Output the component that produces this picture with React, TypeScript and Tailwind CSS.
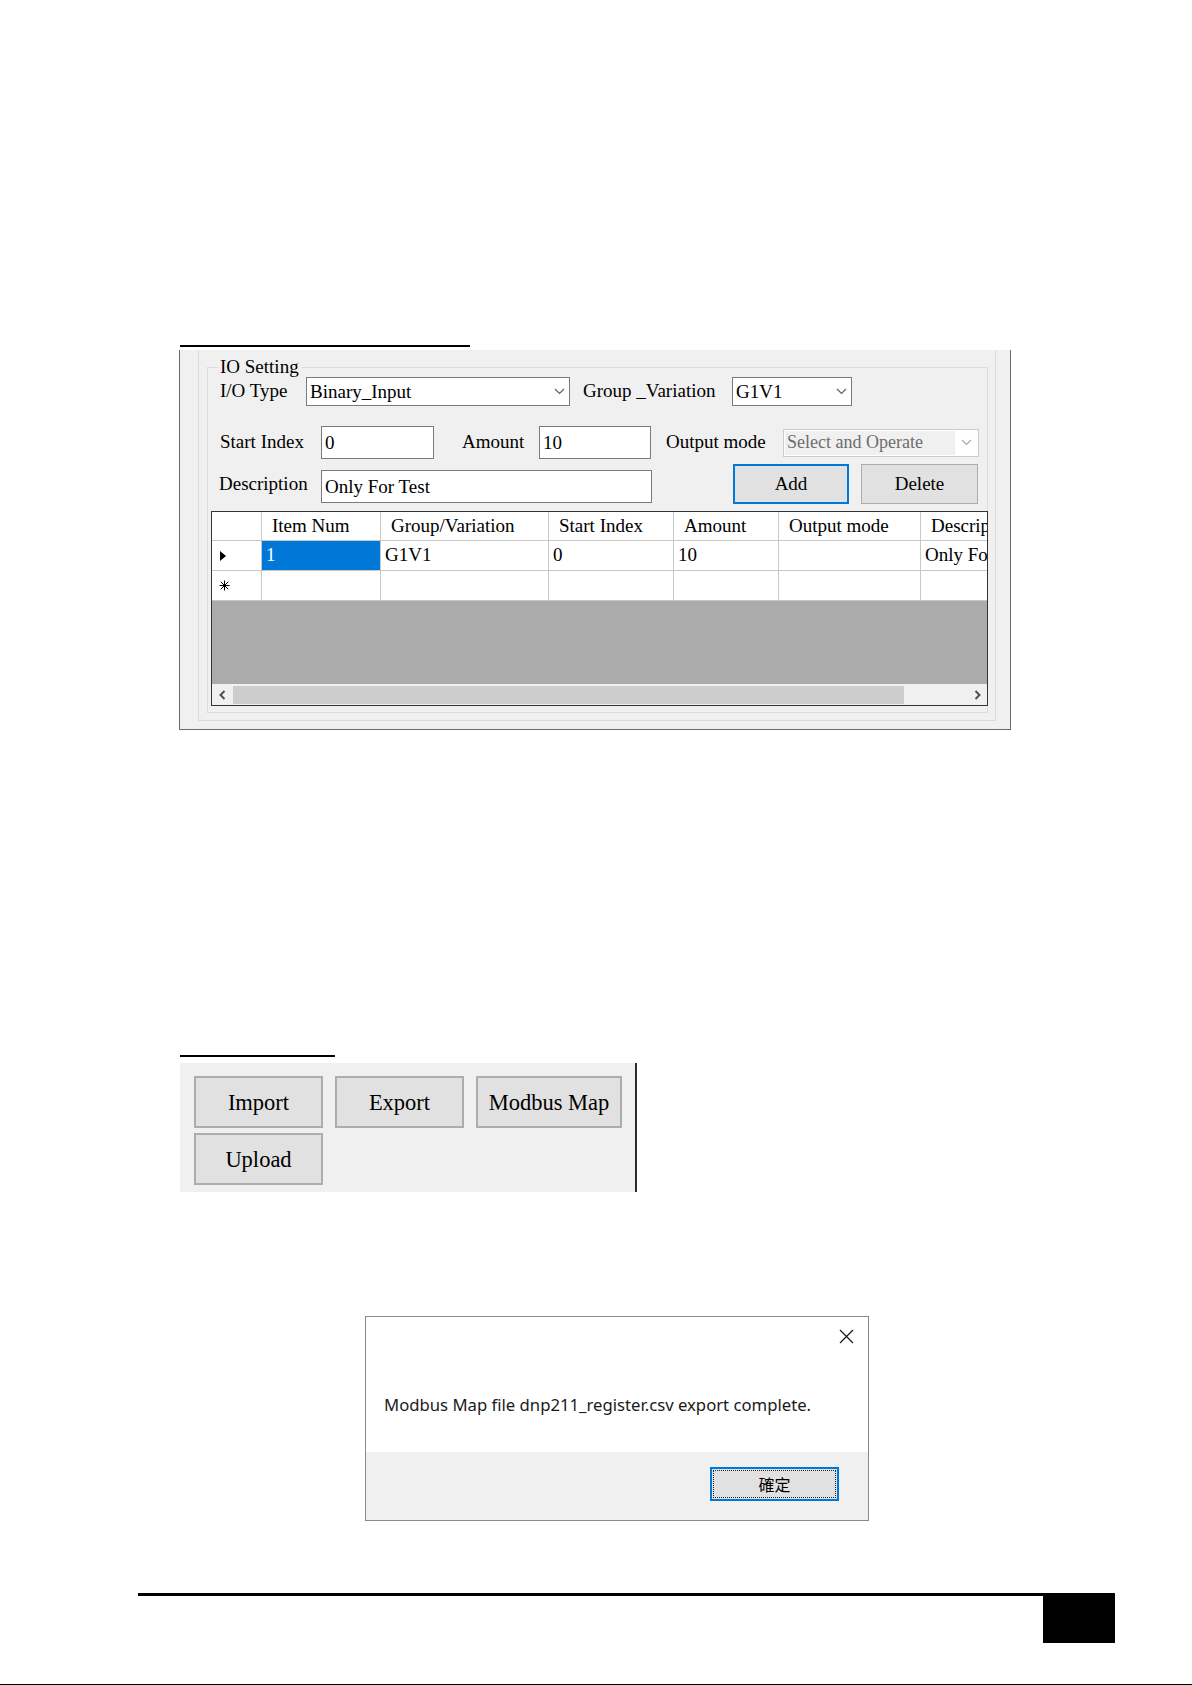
import React from 'react';

const serif = { fontFamily: '"Liberation Serif", "Times New Roman", serif' };

const Chevron = ({ color = '#606060' }: { color?: string }) => (
  <svg width="11" height="7" viewBox="0 0 11 7" className="shrink-0">
    <polyline points="1,1 5.5,5.5 10,1" fill="none" stroke={color} strokeWidth="1.2" />
  </svg>
);

const Combo = ({ value, w }: { value: string; w: string }) => (
  <div className={`${w} h-[29px] bg-white border border-[#7a7a7a] flex items-center justify-between pl-[3px] pr-[4px]`}>
    <span className="leading-none">{value}</span>
    <Chevron />
  </div>
);

const Field = ({ value, w }: { value: string; w: string }) => (
  <div className={`${w} h-[33px] bg-white border border-[#7a7a7a] flex items-center pl-[3px]`}>
    <span className="leading-none">{value}</span>
  </div>
);

const cols = ['', 'Item Num', 'Group/Variation', 'Start Index', 'Amount', 'Output mode', 'Description'];
const row1 = ['1', 'G1V1', '0', '10', '', 'Only For Test'];
const gridCols = 'grid grid-cols-[50px_119px_168px_125px_105px_142px_160px]';

function IoTable() {
  return (
    <div className="ml-[3px] mt-[7px] w-[777px] h-[195px] border border-[#333] bg-[#ababab] overflow-hidden flex flex-col">
      <div className={`${gridCols} h-[29px] bg-white shrink-0`}>
        {cols.map((c, i) => (
          <div key={i} className="border-r border-b border-[#c8c8c8] pl-[10px] flex items-center whitespace-nowrap overflow-hidden">
            {c}
          </div>
        ))}
      </div>
      <div className={`${gridCols} h-[30px] bg-white shrink-0`}>
        <div className="border-r border-b border-[#c8c8c8] flex items-center pl-[8px]">
          <svg width="6" height="10" viewBox="0 0 6 10"><polygon points="0,0 6,5 0,10" fill="#000" /></svg>
        </div>
        {row1.map((c, i) => (
          <div
            key={i}
            className={`border-r border-b border-[#c8c8c8] pl-[4px] flex items-center whitespace-nowrap overflow-hidden ${i === 0 ? 'bg-[#0078d7] text-white' : ''}`}
          >
            {c}
          </div>
        ))}
      </div>
      <div className={`${gridCols} h-[30px] bg-white shrink-0`}>
        <div className="border-r border-b border-[#c8c8c8] flex items-center pl-[7px]">
          <svg width="11" height="11" viewBox="0 0 11 11" stroke="#000" strokeWidth="1">
            <line x1="5.5" y1="0.5" x2="5.5" y2="10.5" />
            <line x1="0.5" y1="5.5" x2="10.5" y2="5.5" />
            <line x1="1.8" y1="1.8" x2="9.2" y2="9.2" />
            <line x1="9.2" y1="1.8" x2="1.8" y2="9.2" />
          </svg>
        </div>
        {row1.map((_, i) => (
          <div key={i} className="border-r border-b border-[#c8c8c8]" />
        ))}
      </div>
      <div className="flex-1" />
      <div className="h-[21px] bg-[#f0f0f0] flex items-center shrink-0">
        <div className="w-[21px] h-full flex items-center justify-center">
          <svg width="7" height="10" viewBox="0 0 7 10"><polyline points="5.5,1 1.5,5 5.5,9" fill="none" stroke="#505050" strokeWidth="2" /></svg>
        </div>
        <div className="w-[671px] h-[18px] bg-[#cdcdcd]" />
        <div className="flex-1 h-full flex items-center justify-end pr-[6px]">
          <svg width="7" height="10" viewBox="0 0 7 10"><polyline points="1.5,1 5.5,5 1.5,9" fill="none" stroke="#505050" strokeWidth="2" /></svg>
        </div>
      </div>
    </div>
  );
}

function IoSettingPanel() {
  return (
    <div className="ml-[179px] mt-[3px] w-[832px] h-[381px] bg-[#f0f0f0] border-l border-r border-b border-[#6b6b6b] pl-[18px] text-[19px] text-black" style={serif}>
      <div className="w-[798px] h-[371px] border-l border-r border-b border-[#dadada] pl-[8px] pt-[17px]">
        <div className="relative w-[781px] h-[346px] border border-[#dcdcdc]">
          <span className="absolute left-[10px] -top-[12px] px-[2px] bg-[#f0f0f0] leading-[22px]">IO Setting</span>

          <div className="mt-[9px] pl-[12px] flex items-center h-[29px]">
            <span className="w-[86px]">I/O Type</span>
            <Combo value="Binary_Input" w="w-[264px]" />
            <span className="ml-[13px] w-[149px] whitespace-nowrap">Group _Variation</span>
            <Combo value="G1V1" w="w-[120px]" />
          </div>

          <div className="mt-[20px] pl-[12px] flex items-center h-[33px]">
            <span className="w-[101px]">Start Index</span>
            <Field value="0" w="w-[113px]" />
            <span className="ml-[28px] w-[77px]">Amount</span>
            <Field value="10" w="w-[112px]" />
            <span className="ml-[15px] w-[117px] whitespace-nowrap">Output mode</span>
            <div className="w-[196px] h-[28px] bg-white border border-[#cccccc] flex items-center p-[1px]">
              <div className="w-[170px] h-full bg-[#f0f0f0] flex items-center pl-[2px] text-[#6d6d6d] text-[18px] whitespace-nowrap">
                Select and Operate
              </div>
              <div className="flex-1 flex justify-center">
                <Chevron color="#a8a8a8" />
              </div>
            </div>
          </div>

          <div className="mt-[5px] pl-[11px] flex items-center h-[40px]">
            <span className="w-[102px]">Description</span>
            <div className="mt-[5px]">
              <Field value="Only For Test" w="w-[331px]" />
            </div>
            <button className="ml-[81px] w-[116px] h-[40px] bg-[#e1e1e1] border-2 border-[#0078d7]">Add</button>
            <button className="ml-[12px] w-[117px] h-[40px] bg-[#e1e1e1] border border-[#adadad]">Delete</button>
          </div>

          <IoTable />
        </div>
      </div>
    </div>
  );
}

function FileButtons() {
  const btn = 'h-[52px] bg-[#e1e1e1] border-2 border-[#adadad] text-[22.5px]';
  return (
    <div className="ml-[180px] mt-[6px] w-[457px] h-[129px] bg-[#f0f0f0] border-r-2 border-[#2c2c2c] pl-[14px] pt-[13px]" style={serif}>
      <div className="flex flex-wrap gap-x-[12px] gap-y-[5px] w-[440px]">
        <button className={`${btn} w-[129px]`}>Import</button>
        <button className={`${btn} w-[129px]`}>Export</button>
        <button className={`${btn} w-[146px]`}>Modbus Map</button>
        <button className={`${btn} w-[129px]`}>Upload</button>
      </div>
    </div>
  );
}

function ExportDialog() {
  return (
    <div className="ml-[365px] mt-[124px] w-[504px] h-[205px] border border-[#8a8a8a] flex flex-col">
      <div className="h-[135px] bg-white flex flex-col">
        <div className="flex justify-end pt-[12px] pr-[14px]">
          <svg width="15" height="15" viewBox="0 0 15 15" stroke="#1a1a1a" strokeWidth="1.3">
            <line x1="1" y1="1" x2="14" y2="14" />
            <line x1="14" y1="1" x2="1" y2="14" />
          </svg>
        </div>
        <p className="mt-[50px] pl-[18px] text-[16.7px] leading-[21px] text-[#1a1a1a] whitespace-nowrap" style={{ fontFamily: '"Noto Sans", "Open Sans", sans-serif' }}>
          Modbus Map file dnp211_register.csv export complete.
        </p>
      </div>
      <div className="flex-1 bg-[#f0f0f0] flex justify-end pt-[15px] pr-[29px]">
        <div className="w-[129px] h-[34px] border-2 border-[#0078d7] bg-[#e1e1e1] p-[1px]">
          <div className="w-full h-full border border-dotted border-[#222] flex items-center justify-center text-[16px]" style={{ fontFamily: '"Noto Sans CJK TC", "Noto Sans CJK SC", sans-serif' }}>
            確定
          </div>
        </div>
      </div>
    </div>
  );
}

export default function App() {
  return (
    <div className="w-[1192px] h-[1685px] bg-white overflow-hidden flex flex-col">
      <div className="ml-[180px] mt-[345px] w-[290px] h-[2px] bg-black" />
      <IoSettingPanel />

      <div className="ml-[180px] mt-[325px] w-[155px] h-[2px] bg-black" />
      <FileButtons />

      <ExportDialog />

      <div className="ml-[138px] mt-[72px] w-[977px] flex flex-col items-end">
        <div className="w-full h-[3px] bg-black" />
        <div className="w-[72px] h-[47px] bg-black" />
      </div>

      <div className="mt-[41px] w-full h-[1px] bg-black" />
    </div>
  );
}
